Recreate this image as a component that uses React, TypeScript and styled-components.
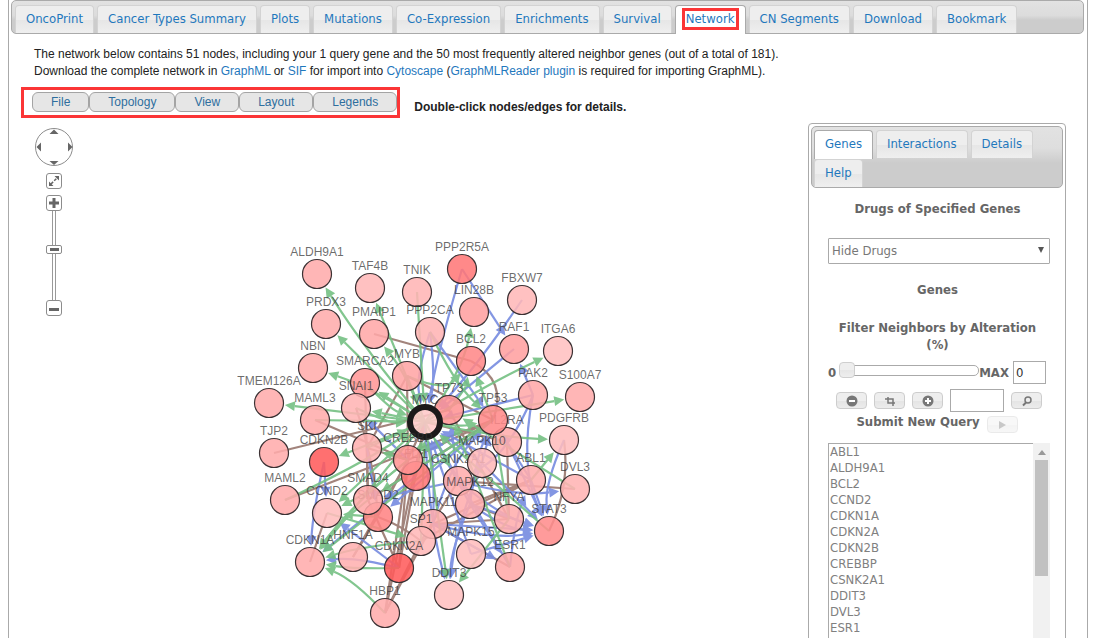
import React, { useState } from "react";
import styled, { createGlobalStyle, css } from "styled-components";

const sans = `"Liberation Sans", Arial, sans-serif`;
const ui = `"DejaVu Sans Condensed", "DejaVu Sans", Verdana, sans-serif`;
const line = "#aaaaaa";
const linkBlue = "#1f78bd";

const Global = createGlobalStyle`
  *, *::before, *::after { box-sizing: border-box; }
  body { margin: 0; background: #fff; font: 12px/17px ${sans}; color: #222; }
  button, input, select { font: inherit; margin: 0; }
  a { color: ${linkBlue}; text-decoration: none; }
`;

const Page = styled.main`
  height: 100vh;
  overflow: hidden;
  margin: 0 26px 0 8px;
  padding: 0 3px 0 2px;
  border: solid ${line};
  border-width: 0 1px;
  display: flex;
  flex-direction: column;
`;

const TabBar = styled.nav<{ $small?: boolean }>`
  flex: none;
  display: flex;
  flex-wrap: wrap;
  column-gap: 3px;
  row-gap: 1px;
  padding: ${(p) => (p.$small ? "3px 2px 0" : "4px 3px 0")};
  border: 1px solid ${line};
  border-radius: 5px;
  background: ${(p) =>
    p.$small
      ? "linear-gradient(#e2e2e2, #dedede 35%, #cccccc 60%)"
      : "linear-gradient(#e2e2e2, #dcdcdc 45%, #cccccc 60%)"};
`;

const Tab = styled.button<{ $active?: boolean }>`
  height: 28px;
  padding: 0 10px 2px;
  border: 1px solid #d3d3d3;
  border-bottom: 0;
  border-radius: 4px 4px 0 0;
  background: linear-gradient(#eeeeee 50%, #e6e6e6 52%, #efefef);
  color: ${linkBlue};
  font: 13px/24px ${ui};
  white-space: nowrap;
  ${(p) =>
    p.$active &&
    css`
      height: 29px;
      margin-bottom: -1px;
      background: #fff;
      border-color: ${line};
    `}
`;

const Marked = styled.span`
  display: block;
  margin: 0 -4px;
  padding: 0 1px;
  border: 3px solid #fb3536;
  line-height: 16px;
`;

const Intro = styled.p`
  flex: none;
  margin: 0;
  padding: 12px 23px 7px;
`;

const MenuRow = styled.div`
  flex: none;
  display: flex;
  align-items: center;
  gap: 14px;
  padding-left: 10px;
`;

const Menu = styled.div`
  display: flex;
  padding: 2px 0 3px 8px;
  border: 3px solid #fb3536;
`;

const MenuButton = styled.button`
  height: 20px;
  padding: 0 18px;
  border: 1px solid #a4a4a4;
  border-radius: 6px;
  background: #e6e6e6;
  color: #2e6e9e;
  line-height: 17px;
`;

const Hint = styled.strong`
  padding-top: 10px;
`;

const Workspace = styled.div`
  flex: 1;
  min-height: 0;
  display: flex;
  align-items: flex-start;
  padding: 5px 18px 0 24px;
`;

const NavColumn = styled.div`
  width: 38px;
  flex: none;
  padding-top: 5px;
  display: flex;
  flex-direction: column;
  align-items: center;
`;

const NavButton = styled.button<{ $gap?: number }>`
  width: 16px;
  height: 16px;
  padding: 0;
  margin-top: ${(p) => p.$gap ?? 0}px;
  border: 1px solid #8c8c8c;
  border-radius: 3px;
  background: #fff;
  display: grid;
  place-items: center;
`;

const Pan = styled.button`
  width: 38px;
  height: 38px;
  padding: 0;
  border: 0;
  background: none;
  svg { display: block; }
`;

const ZoomRange = styled.input`
  appearance: none;
  writing-mode: vertical-lr;
  direction: rtl;
  width: 16px;
  height: 89px;
  background: linear-gradient(90deg, transparent 6px, #999 6px 7px, #fff 7px 9px, #999 9px 10px, transparent 10px);
  &::-webkit-slider-thumb {
    appearance: none;
    width: 16px;
    height: 9px;
    border: 1px solid #8c8c8c;
    border-radius: 2px;
    background: linear-gradient(#666, #666) 50% 50% / 9px 3px no-repeat #fff;
  }
`;

const Graph = styled.svg`
  flex: 1;
  min-width: 0;
  height: 515px;
`;

const Side = styled.aside`
  width: 258px;
  height: 760px;
  flex: none;
  padding: 2px;
  border: 1px solid ${line};
  border-radius: 4px;
  color: #666;
  font: 13px/16px ${ui};
`;

const SideBody = styled.div`
  padding: 12px 13px 0 17px;
`;

const Title = styled.h3<{ $before?: number; $after?: number }>`
  margin: ${(p) => p.$before ?? 0}px 8px ${(p) => p.$after ?? 0}px 5px;
  font: bold 13px/17px ${ui};
  text-align: center;
`;

const DrugSelect = styled.div`
  position: relative;
  select {
    display: block;
    appearance: none;
    width: 100%;
    height: 26px;
    padding: 0 3px;
    border: 1px solid ${line};
    border-radius: 1px;
    background: #fff;
    color: #777;
  }
  svg {
    position: absolute;
    right: 5px;
    top: 8px;
    pointer-events: none;
  }
`;

const Bold = styled.label`
  font: bold 13px/17px ${ui};
`;

const FilterRow = styled.div`
  display: flex;
  align-items: center;
  margin: 8px 4px 0 0;
`;

const FilterRange = styled.input`
  appearance: none;
  flex: 1;
  min-width: 0;
  height: 16px;
  margin: 0 0 5px 3px;
  background: none;
  &::-webkit-slider-runnable-track {
    height: 11px;
    border: 1px solid ${line};
    border-radius: 5px;
    background: #fff;
  }
  &::-webkit-slider-thumb {
    appearance: none;
    width: 16px;
    height: 16px;
    margin: -4px 0 0 -1px;
    border: 1px solid #cfcfcf;
    border-radius: 4px;
    background: linear-gradient(#eee 50%, #e6e6e6 52%, #eee);
  }
`;

const Field = styled.input<{ $w: number }>`
  width: ${(p) => p.$w}px;
  height: 23px;
  padding: 0 2px;
  border: 1px solid ${line};
  background: #fff;
  color: #333;
`;

const ToolRow = styled.div`
  display: flex;
  align-items: center;
  gap: 7px;
  padding: 5px 0 0 8px;
`;

const ToolButton = styled.button`
  width: 31px;
  height: 17px;
  padding: 0;
  border: 1px solid #cdcdcd;
  border-radius: 4px;
  background: linear-gradient(#eee 50%, #e4e4e4 52%, #ececec);
  display: grid;
  place-items: center;
  &:disabled { opacity: 0.4; }
`;

const SubmitRow = styled.div`
  display: flex;
  justify-content: center;
  align-items: flex-start;
  gap: 7px;
  padding: 1px 4px 10px 0;
  button { margin-top: 3px; }
`;

const ListBox = styled.div`
  display: flex;
  height: 300px;
  select {
    flex: 1;
    min-width: 0;
    padding: 0;
    border: 1px solid ${line};
    border-right: 0;
    border-radius: 0;
    background: #fff;
    color: #808080;
    overflow: hidden;
    scrollbar-width: none;
  }
  option {
    height: 16px;
    min-height: 16px;
    padding: 0 1px;
    line-height: 16px;
    color: #808080;
  }
`;

const Scroll = styled.div`
  width: 17px;
  padding: 7px 2px 0;
  background: #f1f1f1;
  svg { display: block; margin: 0 auto 5px; }
`;

const Thumb = styled.div`
  height: 116px;
  background: #c1c1c1;
`;

type NodeDef = [string, number, number, string];
const nodes: NodeDef[] = [
  ["ALDH9A1", 317, 274, "#ffabab"],
  ["TAF4B", 370, 288, "#ffb8b8"],
  ["TNIK", 417, 292, "#ffb4b4"],
  ["PPP2R5A", 462, 269, "#ff7878"],
  ["LIN28B", 474, 312, "#ffa0a0"],
  ["FBXW7", 522, 300, "#ffb8b8"],
  ["PRDX3", 326, 324, "#ffabab"],
  ["PMAIP1", 374, 334, "#ffa8a8"],
  ["PPP2CA", 430, 332, "#ffb3b3"],
  ["RAF1", 514, 349, "#ffa0a0"],
  ["ITGA6", 558, 351, "#ffc0c0"],
  ["NBN", 313, 368, "#ffabab"],
  ["SMARCA2", 365, 383, "#ff9696"],
  ["BCL2", 471, 361, "#ff8787"],
  ["TMEM126A", 269, 403, "#ffabab"],
  ["SNAI1", 356, 408, "#ffb3b3"],
  ["MAML3", 315, 420, "#ffabab"],
  ["MYB", 407, 376, "#ffa4a4"],
  ["TP73", 449, 410, "#ff9393"],
  ["MYC", 425, 422, "#ffc8c8"],
  ["PAK2", 533, 395, "#ffa8a8"],
  ["S100A7", 580, 397, "#ffabab"],
  ["IL2RA", 507, 442, "#ffacac"],
  ["TP53", 493, 420, "#ff8989"],
  ["PDGFRB", 564, 440, "#ffbcbc"],
  ["TJP2", 274, 453, "#ffabab"],
  ["CDKN2B", 324, 462, "#ff5b5b"],
  ["SKI", 367, 448, "#ffb0b0"],
  ["FLI1", 416, 476, "#ff7474"],
  ["CREBBP", 408, 460, "#ff9393"],
  ["CSNK2A1", 458, 481, "#ffacac"],
  ["MAPK10", 482, 463, "#ffb8b8"],
  ["ABL1", 531, 480, "#ffacac"],
  ["DVL3", 575, 489, "#ffb3b3"],
  ["MAML2", 285, 500, "#ffabab"],
  ["CCND2", 327, 513, "#ffbcbc"],
  ["SMAD2", 378, 517, "#ff8383"],
  ["SMAD4", 368, 500, "#ffa8a8"],
  ["MAPK12", 470, 504, "#ffacac"],
  ["MAPK11", 433, 524, "#ffacac"],
  ["NFYA", 509, 519, "#ffacac"],
  ["STAT3", 549, 531, "#ff8c8c"],
  ["SP1", 421, 541, "#ffb8b8"],
  ["MAPK15", 471, 554, "#ffbcbc"],
  ["ESR1", 510, 567, "#ffa8a8"],
  ["HNF1A", 353, 557, "#ffb0b0"],
  ["CDKN1A", 310, 562, "#ffabab"],
  ["CDKN2A", 399, 568, "#ff5b5b"],
  ["DDIT3", 449, 595, "#ffc0c0"],
  ["HBP1", 385, 613, "#ffabab"],
];

/* Each entry is "SOURCE TARGET [bend]"; bend bows the edge sideways. */
const green = `
MYC ALDH9A1 -3|MYC TAF4B|MYC PRDX3|MYC PMAIP1 4|MYC NBN 4|MYC TMEM126A|MYC ITGA6 -2|MYC S100A7|MYC PDGFRB 3
MYC LIN28B 7|MYC SNAI1|MYC SMARCA2|MYC CDKN2B|MYC CCND2|CREBBP CCND2 -3|MYC CDKN1A|CREBBP CDKN1A 5
TP53 CDKN1A|SMAD4 CDKN1A 3|SP1 CDKN1A 3|CDKN2A CDKN1A -2|HBP1 CDKN1A 5|SMAD2 CCND2|TNIK MYC|MAML3 MYC|MAML2 MYC 3
SKI MYC|ESR1 TP73|MYC DDIT3|FLI1 MYC|MYB MYC|MYB BCL2 12|PPP2CA TP53 5|DVL3 TP73|STAT3 MYC|SNAI1 MYC 4|NFYA TP53|MYC TP53 3
NFYA DDIT3|ABL1 PDGFRB|SP1 MYC|TP53 BCL2|CREBBP SKI|SMARCA2 MYC 4|CCND2 SP1|TP53 SMAD4|MYC CSNK2A1|TP73 BCL2 3`;
const blue = `
PPP2R5A MYC 2|PPP2R5A RAF1|FBXW7 MYC -3|RAF1 MYC|PAK2 RAF1|PAK2 MYC|PAK2 STAT3 11|PAK2 CSNK2A1 -10
CDKN2B CDKN1A 2|CDKN2B CCND2|CDKN2A CDKN1A 4|CDKN2A CCND2|SKI SMAD2|ABL1 STAT3|PDGFRB STAT3 6|MAPK10 STAT3|MAPK12 STAT3
MAPK11 STAT3|MAPK11 STAT3 6|MAPK15 STAT3|MAPK10 TP53|MAPK12 TP53 -3|MAPK11 TP53 -8|MAPK15 MYC|CSNK2A1 DVL3 6
CSNK2A1 MYC|MAPK10 MYC|MAPK12 MYC|PPP2CA MYC 6|PPP2CA MYC -4|PPP2CA TP53|MAPK12 DDIT3 4|MAPK10 DDIT3 5
MYC DDIT3 5|MAPK11 ESR1|MAPK12 ESR1|CSNK2A1 SMAD4|TP53 SMAD2|FLI1 CDKN1A|ABL1 TP53|CREBBP SNAI1
ABL1 MYC|ESR1 MYC|IL2RA STAT3|CSNK2A1 STAT3 5|ESR1 ABL1 -3|MAPK12 STAT3 6|MAPK11 MYC 3|CSNK2A1 TP73`;
const brown = `
TJP2 TP73|MAML2 TP53|MAML3 CREBBP|CCND2 CDKN1A|HNF1A CREBBP|HNF1A MYC 3|HBP1 MYC|HBP1 CREBBP|HBP1 SP1|CDKN2A MYC
CDKN2A CREBBP|MYB SKI|MYB CREBBP|BCL2 TP53 -14|PMAIP1 BCL2|MYB TP53|SP1 CSNK2A1|MAPK11 ESR1|PDGFRB STAT3 -7|ABL1 SP1
DVL3 CSNK2A1|IL2RA NFYA|TP73 NFYA|SMAD2 SP1 -2|SMARCA2 SMAD4|SNAI1 SMAD2 -4|SKI CREBBP|MAPK12 ABL1|NFYA MAPK11|CREBBP TP53
SKI SMAD4|SMAD4 CDKN2A|HBP1 MAPK11|ABL1 MAPK11|TP53 SMAD4|NFYA MAPK12|MYC IL2RA`;

const at = Object.fromEntries(nodes.map(([n, x, y]) => [n, [x, y]]));

function Edges({ list, color, arrow }: { list: string; color: string; arrow?: boolean }) {
  return (
    <g stroke={color} fill="none" strokeWidth="2.2" opacity="0.9">
      {list.trim().split(/[|\n]/).map((item, i) => {
        const [a, b, bend = "0"] = item.split(" ");
        const [x1, y1] = at[a];
        const [x2, y2] = at[b];
        const len = Math.hypot(x2 - x1, y2 - y1);
        const k = Number(bend) * 2;
        const cx = (x1 + x2) / 2 - ((y2 - y1) / len) * k;
        const cy = (y1 + y2) / 2 + ((x2 - x1) / len) * k;
        const dl = Math.hypot(x2 - cx, y2 - cy);
        const ux = (x2 - cx) / dl;
        const uy = (y2 - cy) / dl;
        const r = b === "MYC" ? 19 : 16;
        const tx = x2 - ux * r;
        const ty = y2 - uy * r;
        const bx = tx - ux * 10;
        const by = ty - uy * 10;
        return (
          <g key={i}>
            <path d={`M${x1} ${y1}Q${cx} ${cy} ${arrow ? bx : x2} ${arrow ? by : y2}`} />
            {arrow && (
              <path
                stroke="none"
                fill={color}
                d={`M${tx} ${ty}L${bx - uy * 5} ${by + ux * 5}L${bx + uy * 5} ${by - ux * 5}Z`}
              />
            )}
          </g>
        );
      })}
    </g>
  );
}

function Network() {
  return (
    <Graph viewBox="230 123 421 515" role="img" aria-label="Gene network">
      <Edges list={brown} color="#98776e" />
      <Edges list={blue} color="#768be0" arrow />
      <Edges list={green} color="#75c083" arrow />
      {nodes.map(([name, x, y, fill]) => (
        <g key={name}>
          <circle
            cx={x}
            cy={y}
            r={name === "MYC" ? 15 : 14.5}
            fill={fill}
            fillOpacity="0.87"
            stroke={name === "MYC" ? "#1c1a1b" : "#3b3133"}
            strokeWidth={name === "MYC" ? 6 : 1.2}
          />
          <text x={x} y={y - 18} textAnchor="middle" fontSize="12" fontFamily={sans} fill="#333" fillOpacity="0.72">
            {name}
          </text>
        </g>
      ))}
    </Graph>
  );
}

const mainTabs = ["OncoPrint", "Cancer Types Summary", "Plots", "Mutations", "Co-Expression", "Enrichments", "Survival", "Network", "CN Segments", "Download", "Bookmark"];
const sideTabs = ["Genes", "Interactions", "Details", "Help"];
const genes = ["ABL1", "ALDH9A1", "BCL2", "CCND2", "CDKN1A", "CDKN2A", "CDKN2B", "CREBBP", "CSNK2A1", "DDIT3", "DVL3", "ESR1", "FBXW7", "FLI1", "HBP1", "HNF1A", "IL2RA", "ITGA6"];

const icons = {
  minus: <><circle cx="7" cy="6" r="5.5" fill="#777" /><path d="M4 6h6" stroke="#fff" strokeWidth="2" /></>,
  plus: <><circle cx="7" cy="6" r="5.5" fill="#777" /><path d="M4 6h6M7 3v6" stroke="#fff" strokeWidth="2" /></>,
  crop: <path d="M2 4h8v7M5 2v6h7" fill="none" stroke="#777" strokeWidth="1.5" />,
  search: <><circle cx="8" cy="5" r="3" fill="none" stroke="#777" strokeWidth="1.5" /><path d="M6 7.500L3 10.500" stroke="#777" strokeWidth="2" /></>,
  play: <path d="M4 2l7 4-7 4z" fill="#777" />,
};

function IconButton({ icon, label, disabled }: { icon: keyof typeof icons; label: string; disabled?: boolean }) {
  return (
    <ToolButton aria-label={label} disabled={disabled}>
      <svg width="14" height="12">{icons[icon]}</svg>
    </ToolButton>
  );
}

export default function App() {
  const [filter, setFilter] = useState("0");
  return (
    <>
      <Global />
      <Page>
        <TabBar>
          {mainTabs.map((t) => (
            <Tab key={t} $active={t === "Network"}>
              {t === "Network" ? <Marked>{t}</Marked> : t}
            </Tab>
          ))}
        </TabBar>
        <Intro>
          The network below contains 51 nodes, including your 1 query gene and the 50 most frequently altered neighbor genes (out of a total of 181).
          <br />
          Download the complete network in <a href="#graphml">GraphML</a> or <a href="#sif">SIF</a> for import into{" "}
          <a href="#cytoscape">Cytoscape</a> (<a href="#reader">GraphMLReader plugin</a> is required for importing GraphML).
        </Intro>
        <MenuRow>
          <Menu>
            {["File", "Topology", "View", "Layout", "Legends"].map((m) => (
              <MenuButton key={m}>{m}</MenuButton>
            ))}
          </Menu>
          <Hint>Double-click nodes/edges for details.</Hint>
        </MenuRow>
        <Workspace>
          <NavColumn>
            <Pan aria-label="Pan">
              <svg width="38" height="38">
                <circle cx="19" cy="19" r="18.500" fill="#fff" stroke="#8c8c8c" />
                <path d="M14.500 6h9l-4.500-4.500zM14.500 33h9l-4.500 4zM6 14.500v9L1.500 19zM33 14.500v9l4.500-4.500z" fill="#666" />
              </svg>
            </Pan>
            <NavButton aria-label="Fit to screen" $gap={7}>
              <svg width="14" height="14">
                <path d="M4 10l6-6" stroke="#666" strokeWidth="1.500" strokeDasharray="3 1.500" />
                <path d="M7.500 2H12v4.500zM2 7.500V12h4.500z" fill="#666" />
              </svg>
            </NavButton>
            <NavButton aria-label="Zoom in" $gap={6}>
              <svg width="14" height="14"><path d="M2 7h10M7 2v10" stroke="#666" strokeWidth="3" /></svg>
            </NavButton>
            <ZoomRange type="range" aria-label="Zoom level" defaultValue={58} />
            <NavButton aria-label="Zoom out">
              <svg width="14" height="14"><path d="M2 8.500h10" stroke="#666" strokeWidth="3" /></svg>
            </NavButton>
          </NavColumn>
          <Network />
          <Side>
            <TabBar $small>
              {sideTabs.map((t) => (
                <Tab key={t} $active={t === "Genes"}>{t}</Tab>
              ))}
            </TabBar>
            <SideBody>
              <Title $after={21}>Drugs of Specified Genes</Title>
              <DrugSelect>
                <select aria-label="Drugs of Specified Genes">
                  <option>Hide Drugs</option>
                </select>
                <svg width="8" height="8"><path d="M1 1h6L4 7z" fill="#555" /></svg>
              </DrugSelect>
              <Title $before={17} $after={21}>Genes</Title>
              <Title>Filter Neighbors by Alteration (%)</Title>
              <FilterRow>
                <Bold htmlFor="alteration">0</Bold>
                <FilterRange id="alteration" type="range" value={filter} onChange={(e) => setFilter(e.target.value)} />
                <Bold htmlFor="alteration-value">MAX&nbsp;</Bold>
                <Field id="alteration-value" $w={33} value={filter} onChange={(e) => setFilter(e.target.value)} />
              </FilterRow>
              <ToolRow>
                <IconButton icon="minus" label="Hide selected" />
                <IconButton icon="crop" label="Show only selected" />
                <IconButton icon="plus" label="Show all" />
                <Field aria-label="Search genes" $w={54} />
                <IconButton icon="search" label="Search" />
              </ToolRow>
              <SubmitRow>
                <Bold as="span">Submit New Query</Bold>
                <IconButton icon="play" label="Submit New Query" disabled />
              </SubmitRow>
              <ListBox>
                <select multiple size={18} aria-label="Genes">
                  {genes.map((g) => <option key={g}>{g}</option>)}
                </select>
                <Scroll aria-hidden="true">
                  <svg width="8" height="5"><path d="M0 5h8L4 0z" fill="#999" /></svg>
                  <Thumb />
                </Scroll>
              </ListBox>
            </SideBody>
          </Side>
        </Workspace>
      </Page>
    </>
  );
}
